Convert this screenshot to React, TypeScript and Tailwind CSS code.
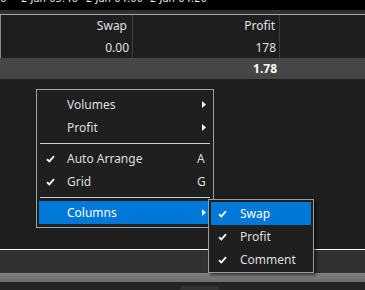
const font = { fontFamily: '"Noto Sans", "Open Sans", sans-serif' };

const Check = () => (
  <svg width="9" height="8" viewBox="0 0 9 8" className="block">
    <path d="M1 4.2 L3.4 6.4 L8 1.2" stroke="#f2f2f2" strokeWidth="1.9" fill="none" />
  </svg>
);

const Arrow = () => (
  <svg width="4" height="7" viewBox="0 0 4 7" className="block">
    <polygon points="0,0 4,3.5 0,7" fill="#f0f0f0" />
  </svg>
);

type ItemProps = {
  label: string;
  checked?: boolean;
  hint?: string;
  sub?: boolean;
  active?: boolean;
};

const MenuItem = ({ label, checked, hint, sub, active }: ItemProps) => (
  <div
    className={`h-[23px] mx-[2px] flex items-center text-[12px] ${
      active ? "bg-[#0078d7] text-white" : "text-[#dedede]"
    }`}
  >
    <div className="w-[28px] pl-[7px]">{checked && <Check />}</div>
    <span className="flex-1">{label}</span>
    {hint && <span className="w-[14px]">{hint}</span>}
    {sub && (
      <div className="w-[9px]">
        <Arrow />
      </div>
    )}
  </div>
);

const Separator = () => (
  <div className="h-[8px] flex items-center px-[3px]">
    <div className="h-px w-full bg-[#d0d0d0]" />
  </div>
);

export default function App() {
  return (
    <div className="relative w-[365px] h-[290px] overflow-hidden bg-[#1e1e1e] select-none" style={font}>
      {/* TOP STRIP (cut off) */}
      <div className="h-[10px] bg-black overflow-hidden">
        <div
          className="flex whitespace-nowrap text-[10px] text-[#e8e8e8] leading-none -mt-[6px]"
          style={{ fontFamily: '"DejaVu Sans", sans-serif' }}
        >
          <span className="w-[21px] shrink-0">6</span>
          <span className="w-[65px] shrink-0">2 Jan 05:46</span>
          <span className="w-[64px] shrink-0">2 Jan 04:00</span>
          <span className="shrink-0">2 Jan 04:20</span>
        </div>
      </div>
      <div className="h-[4px] bg-[#2f2f2f]" />
      <div className="h-px bg-[#a6a6a6]" />

      {/* TABLE */}
      <div className="border-l border-[#8a8a8a]">
        <div className="grid grid-cols-[132px_147px_1fr] h-[22px] text-[12px] text-[#e0e0e0]">
          <div className="border-r border-[#3f3f3f] flex items-center justify-end pr-[5px]">Swap</div>
          <div className="border-r border-[#3f3f3f] flex items-center justify-end pr-[4px]">Profit</div>
          <div />
        </div>
        <div className="grid grid-cols-[132px_147px_1fr] h-[21px] text-[12px] text-[#e0e0e0]">
          <div className="border-r border-[#3f3f3f] flex items-center justify-end pr-[3px]">0.00</div>
          <div className="border-r border-[#3f3f3f] flex items-center justify-end pr-[3px]">178</div>
          <div />
        </div>
      </div>
      <div className="grid grid-cols-[133px_147px_1fr] h-[21px] bg-[#464646] text-[12px] font-bold text-white">
        <div />
        <div className="flex items-center justify-end pr-[3px]">1.78</div>
        <div />
      </div>

      {/* EMPTY AREA */}
      <div className="h-[170px]" />
      <div className="h-px bg-white" />
      <div className="h-[23px] bg-[#313131]" />
      <div className="h-[9px] bg-gradient-to-b from-[#828282] to-[#6c6c6c]" />
      <div className="h-[8px] bg-[#242424] flex items-end pl-[180px]">
        <div className="w-[39px] h-[4px] rounded-t-[3px] bg-[#333333]" />
      </div>

      {/* CONTEXT MENU */}
      <div className="absolute left-[36px] top-[89px] w-[178px] bg-[#1f1f1f] border border-[#a0a0a0] py-[3px]">
        <MenuItem label="Volumes" sub />
        <MenuItem label="Profit" sub />
        <Separator />
        <MenuItem label="Auto Arrange" checked hint="A" />
        <MenuItem label="Grid" checked hint="G" />
        <Separator />
        <MenuItem label="Columns" sub active />
      </div>

      {/* SUBMENU */}
      <div className="absolute left-[208px] top-[199px] w-[106px] bg-[#1f1f1f] border border-[#9c9c9c] pt-[2px] pb-[1px] shadow-[2px_2px_3px_rgba(0,0,0,0.6)]">
        <div className="h-[23px] mx-[2px] flex items-center text-[12px] text-white bg-[#0078d7]">
          <div className="w-[29px] pl-[7px]"><Check /></div>
          <span>Swap</span>
        </div>
        <div className="h-[23px] mx-[2px] flex items-center text-[12px] text-[#dedede]">
          <div className="w-[29px] pl-[7px]"><Check /></div>
          <span>Profit</span>
        </div>
        <div className="h-[23px] mx-[2px] flex items-center text-[12px] text-[#dedede]">
          <div className="w-[29px] pl-[7px]"><Check /></div>
          <span>Comment</span>
        </div>
      </div>
    </div>
  );
}
